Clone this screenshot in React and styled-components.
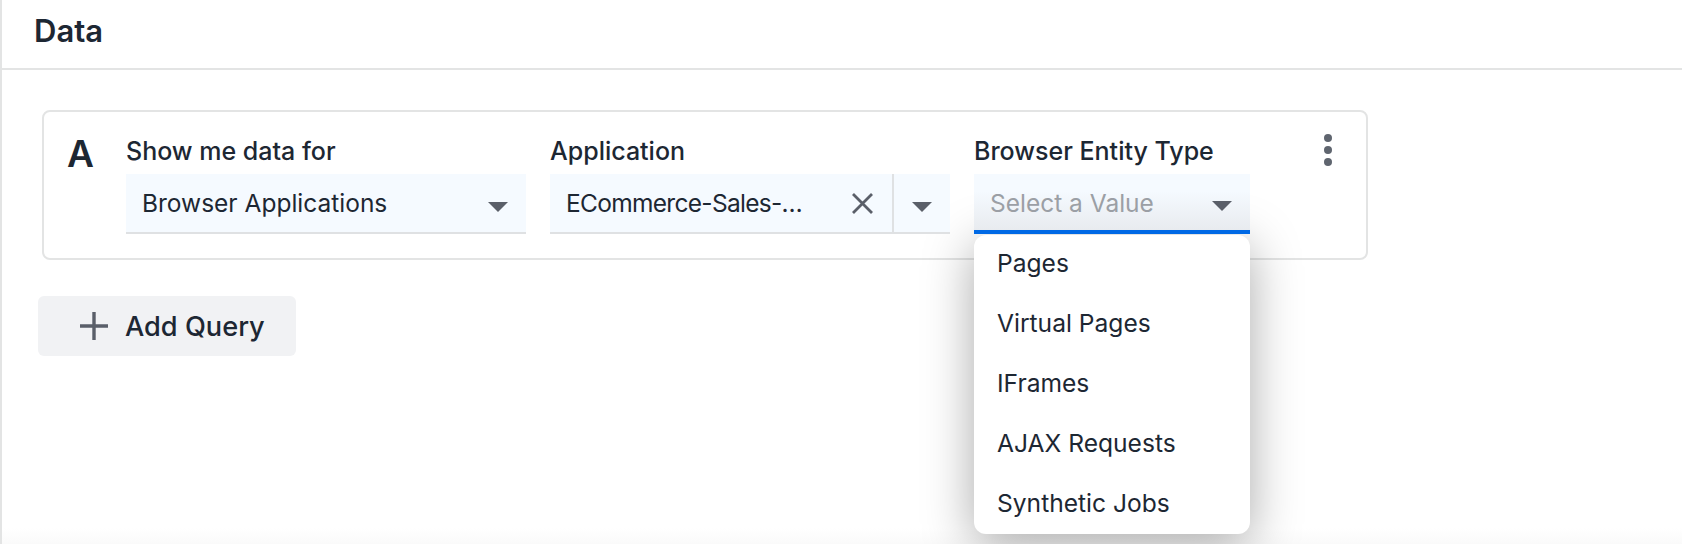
import styled, { createGlobalStyle } from 'styled-components'

const GlobalStyle = createGlobalStyle`
  html, body {
    margin: 0;
    height: 100%;
    background: #fff;
    overflow: hidden;
  }
  body {
    font-family: Inter, "Liberation Sans", sans-serif;
    color: #1d2733;
  }
`

const Panel = styled.div`
  height: 544px;
  border-left: 2px solid #e3e4e4;
  box-sizing: border-box;
  display: flex;
  flex-direction: column;
`

const PanelHeader = styled.div`
  height: 68px;
  flex: none;
  border-bottom: 2px solid #e3e4e4;
  padding-left: 32px;
  display: flex;
  align-items: center;
`

const Title = styled.h2`
  margin: 0 0 6px;
  font-size: 31px;
  font-weight: 600;
  line-height: 40px;
`

const PanelBody = styled.div`
  flex: 1;
  padding: 40px 0 0 36px;
  background: linear-gradient(#fff 458px, #fafafa 474px);
`

const QueryCard = styled.div`
  width: 1326px;
  height: 150px;
  margin-left: 4px;
  box-sizing: border-box;
  border: 2px solid #e3e4e4;
  border-radius: 8px;
  padding: 20px 0 0 23px;
  display: flex;
`

const QueryLetter = styled.div`
  width: 59px;
  flex: none;
  font-size: 37px;
  font-weight: 600;
  line-height: 44px;
`

const Field = styled.div`
  position: relative;
  flex: none;
  width: ${p => p.$width}px;
  margin-right: 24px;
`

const FieldLabel = styled.div`
  font-size: 25px;
  font-weight: 500;
  line-height: 34px;
  height: 40px;
  padding-top: 2px;
  white-space: nowrap;
`

const SelectBox = styled.div`
  position: relative;
  z-index: 1;
  height: 60px;
  box-sizing: border-box;
  display: flex;
  align-items: center;
  background: ${p => (p.$open ? 'linear-gradient(#f5faff 30%, #e8ebef)' : '#f5faff')};
  border-bottom: ${p => (p.$open ? '4px solid #0069e5' : '2px solid #dfe1e3')};
  padding-left: 16px;
`

const SelectValue = styled.span`
  flex: 1;
  font-size: 24.5px;
  line-height: 34px;
  padding-top: ${p => (p.$placeholder ? '2px' : '0')};
  letter-spacing: ${p => (p.$tight ? '-0.7px' : 'normal')};
  white-space: nowrap;
  color: ${p => (p.$placeholder ? '#9b9fa5' : '#1d2733')};
`

const Caret = styled.span`
  width: 0;
  height: 0;
  margin: 8px 18px 0 0;
  border-left: 10px solid transparent;
  border-right: 10px solid transparent;
  border-top: 10px solid #5a5f69;
`

const ClearButton = styled.span`
  display: flex;
  margin-right: 18px;
  color: #5a5f69;
`

const CaretCell = styled.span`
  height: 100%;
  width: 58px;
  flex: none;
  box-sizing: border-box;
  display: flex;
  align-items: center;
  justify-content: center;
  border-left: 2px solid #dfe1e3;

  ${Caret} {
    margin: 8px 0 0 0;
  }
`

const Menu = styled.ul`
  position: absolute;
  top: 103px;
  left: 0;
  right: 0;
  height: 299px;
  margin: 0;
  padding: 0;
  list-style: none;
  background: #fff;
  border-radius: 12px;
  box-shadow: 0 10px 50px rgba(0, 0, 0, 0.34);
`

const MenuItem = styled.li`
  height: 60px;
  padding-left: 23px;
  font-size: 24.6px;
  line-height: 56px;
`

const MoreButton = styled.span`
  display: flex;
  flex-direction: column;
  gap: 4px;
  margin: 2px 0 0 50px;

  i {
    display: block;
    width: 8px;
    height: 8px;
    border-radius: 50%;
    background: #5f656f;
  }
`

const AddButton = styled.button`
  margin: 36px 0 0;
  width: 258px;
  height: 60px;
  display: flex;
  align-items: center;
  gap: 17px;
  padding: 0 0 0 42px;
  border: 0;
  border-radius: 6px;
  background: #f1f2f4;
  font-family: inherit;
  font-size: 27.2px;
  font-weight: 500;
  color: #1d2733;
`

export default function App() {
  return (
    <>
      <GlobalStyle />
      <Panel>
        <PanelHeader>
          <Title>Data</Title>
        </PanelHeader>
        <PanelBody>
          <QueryCard>
            <QueryLetter>A</QueryLetter>
            <Field $width={400}>
              <FieldLabel>Show me data for</FieldLabel>
              <SelectBox>
                <SelectValue>Browser Applications</SelectValue>
                <Caret />
              </SelectBox>
            </Field>
            <Field $width={400}>
              <FieldLabel>Application</FieldLabel>
              <SelectBox>
                <SelectValue $tight>ECommerce-Sales-…</SelectValue>
                <ClearButton>
                  <svg width="23" height="23" viewBox="0 0 23 23" fill="none" stroke="currentColor" strokeWidth="2.8">
                    <path d="M2 2 L21 21 M21 2 L2 21" />
                  </svg>
                </ClearButton>
                <CaretCell>
                  <Caret />
                </CaretCell>
              </SelectBox>
            </Field>
            <Field $width={276}>
              <FieldLabel>Browser Entity Type</FieldLabel>
              <SelectBox $open>
                <SelectValue $placeholder>Select a Value</SelectValue>
                <Caret />
              </SelectBox>
              <Menu>
                <MenuItem>Pages</MenuItem>
                <MenuItem>Virtual Pages</MenuItem>
                <MenuItem>IFrames</MenuItem>
                <MenuItem>AJAX Requests</MenuItem>
                <MenuItem>Synthetic Jobs</MenuItem>
              </Menu>
            </Field>
            <MoreButton>
              <i />
              <i />
              <i />
            </MoreButton>
          </QueryCard>
          <AddButton>
            <svg width="28" height="28" viewBox="0 0 28 28" stroke="#5a5f69" strokeWidth="3.4" fill="none">
              <path d="M14 0 V28 M0 14 H28" />
            </svg>
            Add Query
          </AddButton>
        </PanelBody>
      </Panel>
    </>
  )
}
